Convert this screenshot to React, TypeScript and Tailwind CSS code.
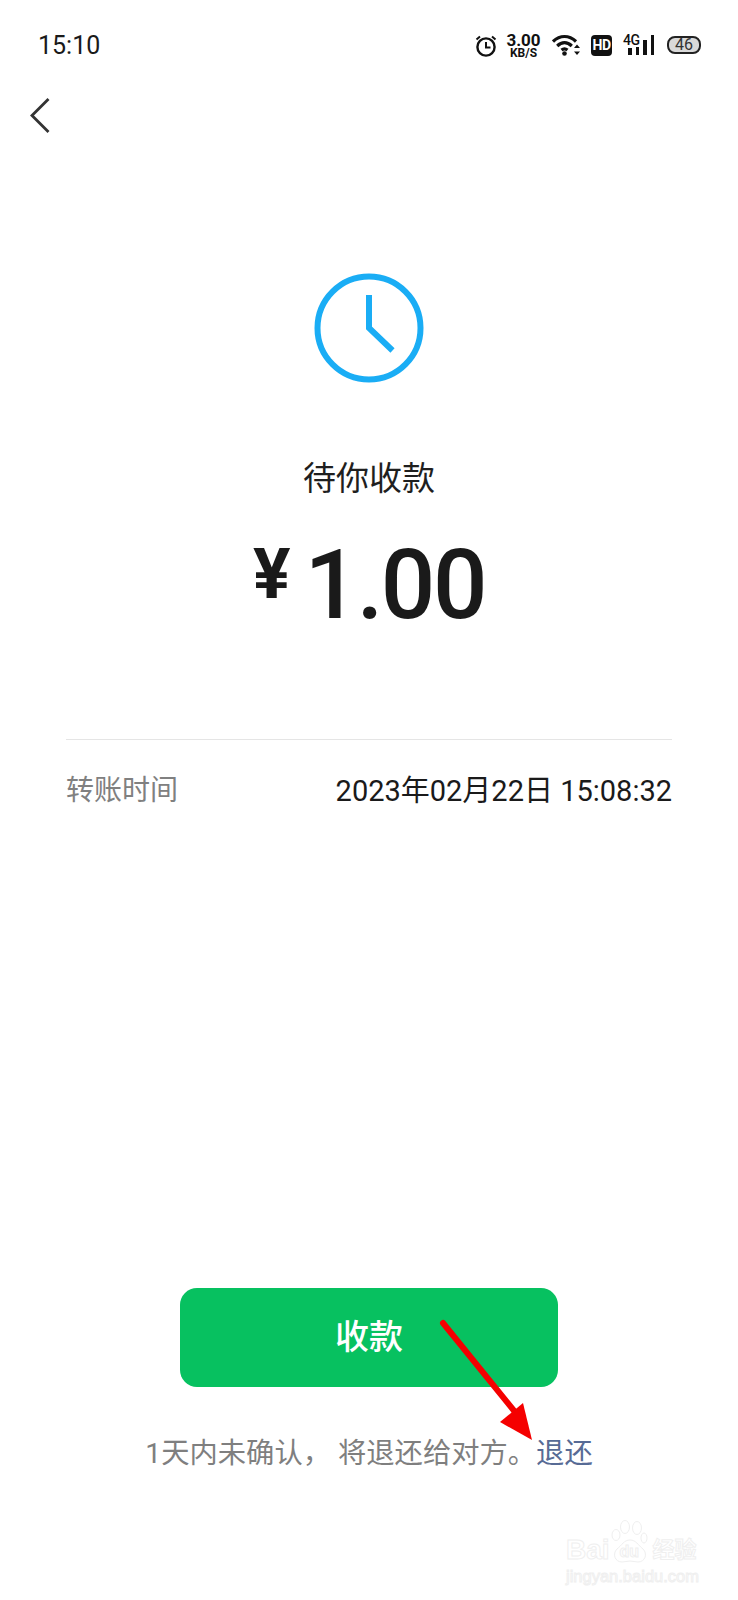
const FONT = "font-['Roboto','Noto_Sans_CJK_SC',sans-serif]"

function StatusIcons() {
  return (
    <div className="flex items-center text-[#111]">
      {/* alarm */}
      <svg width="22" height="23" viewBox="0 0 22 23" fill="none" stroke="#111" strokeWidth="2.4" className="mr-[9px]">
        <circle cx="11" cy="13" r="8.6" />
        <path d="M11 8v5.5h4.5" strokeWidth="2" />
        <path d="M1.5 5.5 5 2.5M20.500 5.500 17 2.500" strokeWidth="2" />
      </svg>
      <div className="mr-[11px] flex w-[35px] flex-col items-center font-bold leading-none">
        <span className="text-[17px] leading-[14px]">3.00</span>
        <span className="mt-[1px] text-[12px] leading-[10px]">KB/S</span>
      </div>
      {/* wifi + up/down */}
      <svg width="28" height="22" viewBox="0 0 28 22" fill="none" stroke="#111" strokeWidth="3.200" className="mr-[11px]">
        <path d="M1 7.500C8 .8 17 .8 24 7.500" />
        <path d="M5.200 12C9.800 7.600 15.200 7.600 19.800 12" />
        <path d="M9.500 16C11.500 14.400 13.500 14.400 15.500 16" />
        <circle cx="12.500" cy="19.500" r="2.300" fill="#111" stroke="none" />
        <path d="M25 10.500l-3 3.500h6zM25 21l-3-3.500h6z" fill="#111" stroke="none" />
      </svg>
      <div className="mr-[11px] flex h-[21px] w-[21px] items-center justify-center rounded-[4px] bg-[#111] text-[14px] font-bold tracking-[-0.5px] text-white">
        HD
      </div>
      <div className="relative mr-[13px] flex h-[20px] w-[31px] items-end justify-end gap-[4px]">
        <span className="absolute top-[-2px] left-0 text-[14px] leading-[14px] font-medium tracking-[-0.5px]">4G</span>
        <i className="h-[7px] w-[3.500px] bg-[#111]" />
        <i className="h-[8px] w-[3.500px] bg-[#111]" />
        <i className="h-[15px] w-[3.500px] bg-[#111]" />
        <i className="h-[20px] w-[3.500px] bg-[#111]" />
      </div>
      <div className="flex h-[18px] w-[34px] items-center justify-center rounded-[8px] border-2 border-[#222] bg-[#d9d9d9] text-[16px] leading-none text-[#333]">
        46
      </div>
    </div>
  )
}

function BaiduMark() {
  const outline = "text-transparent [-webkit-text-stroke:1px_#efefef]"
  return (
    <div className="absolute top-[1520px] left-[566px] w-[150px] font-['Liberation_Sans','Noto_Sans_CJK_SC',sans-serif]">
      <div className="flex h-[44px] items-end">
        <span className={`text-[28px] leading-[28px] font-bold ${outline}`}>Bai</span>
        <div className="relative mr-[3px] h-[44px] w-[40px] shrink-0">
          <svg width="40" height="44" viewBox="0 0 40 44" fill="none" stroke="#efefef">
            <ellipse cx="6" cy="15" rx="4" ry="5.500" />
            <ellipse cx="15" cy="7" rx="4.500" ry="6.500" />
            <ellipse cx="27" cy="8" rx="4.500" ry="6.500" />
            <ellipse cx="34" cy="18" rx="3" ry="5" />
            <path d="M20 20c6 0 8 5 13 9 5 5 2 13-5 13-3 0-5-1-8-1s-5 1-8 1c-7 0-10-8-5-13 5-4 7-9 13-9z" />
          </svg>
          <span className={`absolute bottom-[4px] left-[10px] text-[16px] leading-[16px] font-bold ${outline}`}>du</span>
        </div>
        <span className={`text-[22px] leading-[28px] font-bold ${outline}`}>经验</span>
      </div>
      <div className={`mt-[3px] text-[16.500px] leading-[18px] ${outline}`}>jingyan.baidu.com</div>
    </div>
  )
}

export default function App() {
  return (
    <div className={`relative flex h-[1600px] w-[738px] flex-col overflow-hidden bg-white ${FONT}`}>
      <div className="flex h-[92px] items-center justify-between pr-[37px] pb-[2px] pl-[38px]">
        <span className="text-[25px] leading-none text-[#1a1a1a]">15:10</span>
        <StatusIcons />
      </div>

      <div className="mt-[6px] pl-[30px]">
        <svg width="20" height="36" viewBox="0 0 20 36" fill="none" stroke="#333" strokeWidth="2.800" className="block">
          <path d="M18.500 1 2 17.500 18.500 34" />
        </svg>
      </div>

      <div className="mt-[139px] flex flex-col items-center">
        <svg width="110" height="110" viewBox="0 0 110 110" fill="none" stroke="#1aadf5" strokeWidth="6" className="block">
          <circle cx="55" cy="55" r="51.500" />
          <path d="M55 22v33l23.500 22.500" />
        </svg>
        <div className="mt-[74px] text-[33px] leading-[44px] text-[#1f1f1f]">待你收款</div>
        <div className="mt-[34px] flex h-[100px] items-start text-[#1a1a1a]">
          <span className="mt-[-1px] mr-[14px] text-[70px] leading-[80px] font-bold">¥</span>
          <span className="text-[96px] leading-[100px] font-medium tracking-[-2.500px]">1.00</span>
        </div>
      </div>

      <div className="mx-[66px] mt-[104px] h-[1px] bg-[#e5e5e5]" />

      <div className="mx-[66px] mt-[32px] flex items-center justify-between leading-[38px]">
        <span className="text-[28px] text-[#808080]">转账时间</span>
        <span className="text-[29px] text-[#1a1a1a]">2023年02月22日 15:08:32</span>
      </div>

      <div className="mt-auto mb-[126px] flex flex-col items-center">
        <button className="flex h-[99px] w-[378px] items-center justify-center rounded-[17px] bg-[#07c160] text-[34px] font-medium text-white">
          收款
        </button>
        <div className="mt-[47px] text-[28.300px] leading-[40px] whitespace-pre text-[#7f7f7f]">
          1天内未确认， 将退还给对方。<span className="text-[#576b95]">退还</span>
        </div>
      </div>

      {/* red annotation arrow on top of the screenshot */}
      <svg width="110" height="130" viewBox="0 0 110 130" fill="none" className="absolute top-[1318px] left-[436px]">
        <path d="M7 5 79 94" stroke="#f50000" strokeWidth="6" strokeLinecap="round" />
        <path d="M96 122 64 104 87 85z" fill="#f50000" />
      </svg>

      <BaiduMark />
    </div>
  )
}
